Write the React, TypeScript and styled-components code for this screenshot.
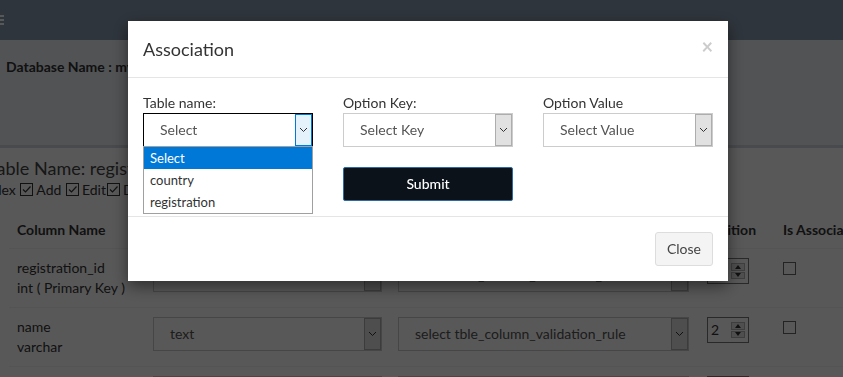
import styled, { createGlobalStyle } from "styled-components";

const GlobalStyle = createGlobalStyle`
  html, body {
    margin: 0;
    padding: 0;
    overflow: hidden;
    width: 843px;
    height: 377px;
  }
  body {
    font-family: Lato, "Liberation Sans", sans-serif;
    font-size: 14px;
    line-height: 20px;
    color: #333;
    background: #ecf0f5;
  }
`;

const Page = styled.div`
  height: 377px;
  overflow: hidden;
`;

const TopBar = styled.div`
  height: 40px;
  background: #889aae;
  display: flex;
  align-items: center;
`;

const MenuButton = styled.div`
  margin-left: -10px;
  width: 14px;
  display: flex;
  flex-direction: column;
  gap: 2px;
  span {
    display: block;
    height: 2px;
    background: #fff;
  }
`;

const Content = styled.div`
  padding-top: 17px;
`;

const DbName = styled.div`
  font-weight: 700;
  padding-left: 6px;
  white-space: nowrap;
`;

const Card = styled.div`
  margin-top: 68px;
  background: #fff;
  border-top: 3px solid #d2d6de;
  padding-top: 8px;
  height: 400px;
`;

const TableTitle = styled.div`
  margin-left: -12px;
  font-size: 18px;
  line-height: 24px;
  color: #444;
  white-space: nowrap;
`;

const CheckRow = styled.div`
  margin-left: -35px;
  white-space: nowrap;
  height: 20px;
  font-size: 14px;
`;

const Tick = styled.span`
  display: inline-block;
  width: 13px;
  height: 13px;
  box-sizing: border-box;
  border: 1px solid #333;
  vertical-align: -1px;
  margin: 0 3px 0 1px;
  svg {
    display: block;
  }
`;

const Grid = styled.div`
  margin-top: 12px;
  margin-left: 9px;
  display: grid;
  grid-template-columns: 136px 245px 307px 78px 140px;
`;

const HeadCell = styled.div`
  padding: 8px;
  font-weight: 700;
  white-space: nowrap;
  border-bottom: 1px solid #f4f4f4;
`;

const Cell = styled.div<{ $first?: boolean }>`
  padding: 9px 8px;
  border-top: ${(p) => (p.$first ? "none" : "1px solid #f4f4f4")};
  white-space: nowrap;
`;

const SelectBox = styled.div<{ $focused?: boolean }>`
  position: relative;
  display: flex;
  align-items: stretch;
  height: 34px;
  box-sizing: border-box;
  border: 1px solid ${(p) => (p.$focused ? "#000" : "#ccc")};
  background: #fff;
  color: #555;
`;

const SelectText = styled.div`
  flex: 1;
  display: flex;
  align-items: center;
  padding-left: 16px;
  white-space: nowrap;
  overflow: hidden;
`;

const ArrowBox = styled.div<{ $focused?: boolean }>`
  width: 17px;
  box-sizing: border-box;
  display: flex;
  align-items: center;
  justify-content: center;
  background: ${(p) => (p.$focused ? "#e5f1fb" : "#e1e1e1")};
  border: 1px solid ${(p) => (p.$focused ? "#0078d7" : "#adadad")};
`;

const Chevron = () => (
  <svg width="9" height="6" viewBox="0 0 9 6">
    <path d="M1 1l3.5 3.5L8 1" fill="none" stroke="#333" strokeWidth="1" />
  </svg>
);

const Dropdown = styled.div`
  position: absolute;
  top: 100%;
  left: -1px;
  right: -1px;
  border: 1px solid #a0a0a0;
  background: #fff;
  z-index: 2;
`;

const Option = styled.div<{ $active?: boolean }>`
  height: 22px;
  line-height: 22px;
  padding: 0 6px;
  font-size: 13px;
  color: ${(p) => (p.$active ? "#fff" : "#333")};
  background: ${(p) => (p.$active ? "#0078d7" : "transparent")};
`;

const NumberBox = styled.div`
  width: 42px;
  height: 26px;
  box-sizing: border-box;
  margin-left: 2px;
  border: 1px solid #767676;
  background: #fff;
  display: flex;
  align-items: center;
  justify-content: space-between;
  padding: 0 3px;
`;

const Spin = styled.div`
  width: 14px;
  height: 16px;
  display: flex;
  flex-direction: column;
  gap: 1px;
  span {
    flex: 1;
    background: #e6e6e6;
    border: 1px solid #b5b5b5;
    display: flex;
    align-items: center;
    justify-content: center;
  }
`;

const CheckEmpty = styled.span`
  display: block;
  margin-top: 4px;
  width: 13px;
  height: 13px;
  box-sizing: border-box;
  border: 1px solid #666;
  background: #fff;
`;

const Backdrop = styled.div`
  position: fixed;
  inset: 0;
  background: rgba(0, 0, 0, 0.655);
`;

const Modal = styled.div`
  position: fixed;
  top: 21px;
  left: 128px;
  width: 600px;
  background: #fff;
  box-shadow: 0 5px 15px rgba(0, 0, 0, 0.5);
`;

const ModalHeader = styled.div`
  display: flex;
  align-items: center;
  justify-content: space-between;
  padding: 15px;
  border-bottom: 1px solid #e5e5e5;
`;

const ModalTitle = styled.div`
  font-size: 18px;
  line-height: 26px;
  color: #333;
`;

const CloseX = styled.span`
  font-size: 20px;
  font-weight: 700;
  line-height: 1;
  color: #ccc;
  margin-top: -6px;
`;

const ModalBody = styled.div`
  padding: 15px;
`;

const FieldGrid = styled.div`
  display: grid;
  grid-template-columns: repeat(3, 170px);
  column-gap: 30px;
  row-gap: 20px;
`;

const Label = styled.div`
  color: #333;
`;

const SubmitButton = styled.div`
  grid-column: 2;
  height: 34px;
  box-sizing: border-box;
  display: flex;
  align-items: center;
  justify-content: center;
  background: #0b1219;
  border: 1px solid #2d6ca2;
  border-radius: 2px;
  color: #fff;
  font-weight: 500;
`;

const ModalFooter = styled.div`
  padding: 15px;
  border-top: 1px solid #e5e5e5;
  display: flex;
  justify-content: flex-end;
`;

const CloseButton = styled.div`
  height: 34px;
  box-sizing: border-box;
  padding: 0 11px;
  display: flex;
  align-items: center;
  background: #f4f4f4;
  border: 1px solid #ddd;
  border-radius: 3px;
  color: #444;
`;

const CheckMark = () => (
  <svg width="11" height="11" viewBox="0 0 11 11">
    <path d="M2 5.5l2.5 2.5L9.5 2.5" fill="none" stroke="#333" strokeWidth="1.2" />
  </svg>
);

const Triangle = ({ up }: { up?: boolean }) => (
  <svg width="6" height="4" viewBox="0 0 6 4">
    <path d={up ? "M0 4L3 0L6 4Z" : "M0 0L3 4L6 0Z"} fill="#333" />
  </svg>
);

type Row = { name: string; type: string; kind: string; pos: string };

const rows: Row[] = [
  { name: "registration_id", type: "int ( Primary Key )", kind: "hidden", pos: "1" },
  { name: "name", type: "varchar", kind: "text", pos: "2" },
  { name: "email", type: "varchar", kind: "text", pos: "3" },
];

function Select({ text, focused }: { text: string; focused?: boolean }) {
  return (
    <SelectBox $focused={focused}>
      <SelectText>{text}</SelectText>
      <ArrowBox $focused={focused}>
        <Chevron />
      </ArrowBox>
    </SelectBox>
  );
}

export default function App() {
  return (
    <>
      <GlobalStyle />
      <Page>
        <TopBar>
          <MenuButton>
            <span />
            <span />
            <span />
          </MenuButton>
        </TopBar>
        <Content>
          <DbName>Database Name : mydb</DbName>
          <Card>
            <TableTitle>Table Name: registration</TableTitle>
            <CheckRow>
              <Tick><CheckMark /></Tick>Index <Tick><CheckMark /></Tick>Add{" "}
              <Tick><CheckMark /></Tick>Edit<Tick><CheckMark /></Tick>Delete
            </CheckRow>
            <Grid>
              <HeadCell>Column Name</HeadCell>
              <HeadCell>Input Type</HeadCell>
              <HeadCell>Validation</HeadCell>
              <HeadCell>Position</HeadCell>
              <HeadCell>Is Association</HeadCell>
              {rows.map((r, i) => (
                <>
                  <Cell key={r.name + "a"} $first={i === 0}>
                    {r.name}
                    <br />
                    {r.type}
                  </Cell>
                  <Cell key={r.name + "b"} $first={i === 0}>
                    <Select text={r.kind} />
                  </Cell>
                  <Cell key={r.name + "c"} $first={i === 0}>
                    <Select text="select tble_column_validation_rule" />
                  </Cell>
                  <Cell key={r.name + "d"} $first={i === 0}>
                    <NumberBox>
                      {r.pos}
                      <Spin>
                        <span><Triangle up /></span>
                        <span><Triangle /></span>
                      </Spin>
                    </NumberBox>
                  </Cell>
                  <Cell key={r.name + "e"} $first={i === 0}>
                    <CheckEmpty />
                  </Cell>
                </>
              ))}
            </Grid>
          </Card>
        </Content>
      </Page>
      <Backdrop />
      <Modal>
        <ModalHeader>
          <ModalTitle>Association</ModalTitle>
          <CloseX>×</CloseX>
        </ModalHeader>
        <ModalBody>
          <FieldGrid>
            <div>
              <Label>Table name:</Label>
              <SelectBox $focused>
                <SelectText>Select</SelectText>
                <ArrowBox $focused>
                  <Chevron />
                </ArrowBox>
                <Dropdown>
                  <Option $active>Select</Option>
                  <Option>country</Option>
                  <Option>registration</Option>
                </Dropdown>
              </SelectBox>
            </div>
            <div>
              <Label>Option Key:</Label>
              <Select text="Select Key" />
            </div>
            <div>
              <Label>Option Value</Label>
              <Select text="Select Value" />
            </div>
            <SubmitButton>Submit</SubmitButton>
          </FieldGrid>
        </ModalBody>
        <ModalFooter>
          <CloseButton>Close</CloseButton>
        </ModalFooter>
      </Modal>
    </>
  );
}
